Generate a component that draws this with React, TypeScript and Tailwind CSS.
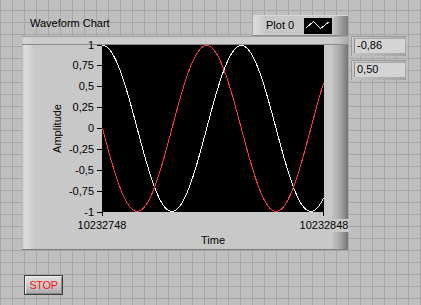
import React from "react";

// y axis labels, top to bottom
const yTicks = ["1", "0,75", "0,5", "0,25", "0", "-0,25", "-0,5", "-0,75", "-1"];

const PLOT_W = 222;
const PLOT_H = 167;

// 101 samples, same as the chart history on screen
function wave(fn: (t: number) => number) {
  const pts: string[] = [];
  for (let n = 0; n <= 100; n++) {
    const x = (n / 100) * (PLOT_W - 1) + 0.5;
    const y = ((1 - fn(n * 0.1)) / 2) * (PLOT_H - 1) + 0.5;
    pts.push(`${x.toFixed(2)},${y.toFixed(2)}`);
  }
  return pts.join(" ");
}

const Legend = () => (
  <div className="flex h-[21px] w-[96px] items-center bg-[linear-gradient(to_right,#dadada_0px,#d8d8d8_5px,#c8c8c8_12px,#c8c8c8_calc(100%-16px),#7c7c7c_100%)] pl-[14px] shadow-[inset_1px_0_0_#a4a4a4,inset_0_1px_0_#d8d8d8,inset_0_-1px_0_#8c8c8c]">
    <span className="w-[38px]">Plot 0</span>
    <div className="h-[16px] w-[28px] bg-black">
      <svg width="28" height="16" viewBox="0 0 28 16" shapeRendering="crispEdges">
        <polyline points="2.5,9.5 9.5,3.5 16.5,10.5 25.5,3.5" fill="none" stroke="#ffffff" strokeWidth="1" />
      </svg>
    </div>
  </div>
);

const Numeric = ({ value }: { value: string }) => (
  <div className="h-[20px] w-[55px] bg-[linear-gradient(135deg,#cfcfcf,#b4b4b4_60%,#a2a2a2)] pb-[3px] pl-[3px] pr-[1px] pt-[2px] shadow-[inset_1px_1px_0_#9a9a9a]">
    <div className="flex h-full items-center bg-[#d4d4d4] pl-[3px] leading-[15px] shadow-[inset_1px_0_0_#8e8e8e,inset_0_1px_0_#a8a8a8]">
      {value}
    </div>
  </div>
);

const WaveformChart = () => {
  const white = wave((t) => Math.cos(t));
  const red = wave((t) => -Math.sin(t));

  return (
    <div className="flex w-[326px] flex-col">
      <div className="flex h-[21px] items-start justify-between">
        <span className="ml-[8px] mt-[2px] leading-[13px]">Waveform Chart</span>
        <Legend />
      </div>

      <div className="grid h-[214px] grid-cols-[80px_222px_24px] grid-rows-[9px_167px_38px] bg-[linear-gradient(to_right,#b4b4b4_0px,#dcdcdc_2px,#d8d8d8_6px,#c8c8c8_12px,#c8c8c8_calc(100%-17px),#a8a8a8_calc(100%-8px),#747474_100%)] shadow-[inset_0_1px_0_#a0a0a0,inset_0_-1px_0_#7c7c7c]">
        <div className="col-span-3 border-b border-[#8a8a8a] bg-[#cfcfcf]/60 shadow-[inset_0_1px_0_#a0a0a0]" />

        {/* y axis */}
        <div className="flex">
          <div className="flex w-[28px]" />
          <div className="flex w-[15px] items-center justify-center">
            <span className="rotate-180 leading-[13px] [writing-mode:vertical-rl]">Amplitude</span>
          </div>
          <div className="flex flex-1 flex-col justify-between">
            {yTicks.map((t) => (
              <div key={t} className="flex h-0 items-center justify-end gap-[3px]">
                <span className="leading-[13px]">{t}</span>
                <span className="h-px w-[5px] bg-black" />
              </div>
            ))}
          </div>
        </div>

        {/* plot */}
        <div className="bg-black">
          <svg width={PLOT_W} height={PLOT_H} viewBox={`0 0 ${PLOT_W} ${PLOT_H}`} shapeRendering="crispEdges">
            <polyline points={white} fill="none" stroke="#ffffff" strokeWidth="1" />
            <polyline points={red} fill="none" stroke="#ff3a3a" strokeWidth="1" />
          </svg>
        </div>
        <div />

        <div />
        {/* x axis */}
        <div className="flex flex-col">
          <div className="flex h-[4px] justify-between">
            <span className="w-px bg-black" />
            <span className="w-px bg-black" />
          </div>
          <div className="mt-[3px] flex justify-between">
            <div className="flex w-0 justify-center">
              <span className="bg-[#c8c8c8] px-px leading-[13px]">10232748</span>
            </div>
            <div className="flex w-0 justify-center">
              <span className="bg-[#c8c8c8] px-px leading-[13px]">10232848</span>
            </div>
          </div>
          <span className="mt-[2px] text-center leading-[13px]">Time</span>
        </div>
        <div />
      </div>
    </div>
  );
};

export default function App() {
  return (
    <div className="h-[305px] w-[421px] overflow-hidden bg-[#bfbfbf] bg-[linear-gradient(to_right,#a7a7a7_1px,transparent_1px),linear-gradient(to_bottom,#a7a7a7_1px,transparent_1px)] bg-[size:12px_12px] bg-[position:0_10px] font-['Liberation_Sans',Arial,sans-serif] text-[11px] text-black">
      <div className="flex pl-[22px] pt-[15px]">
        <WaveformChart />
        <div className="ml-[3px] mt-[21px] flex flex-col gap-[4px]">
          <Numeric value="-0,86" />
          <Numeric value="0,50" />
        </div>
      </div>

      <div className="ml-[24px] mt-[25px]">
        <button className="flex h-[20px] w-[39px] items-center justify-center border border-[#3c3c3c] bg-[linear-gradient(to_bottom,#e2e2e2,#c4c4c4_60%,#a8a8a8)] text-[11px] leading-[13px] tracking-[-0.4px] text-[#ff1010] shadow-[inset_1px_1px_0_#f0f0f0,inset_-1px_-1px_0_#8a8a8a]">
          STOP
        </button>
      </div>
    </div>
  );
}
